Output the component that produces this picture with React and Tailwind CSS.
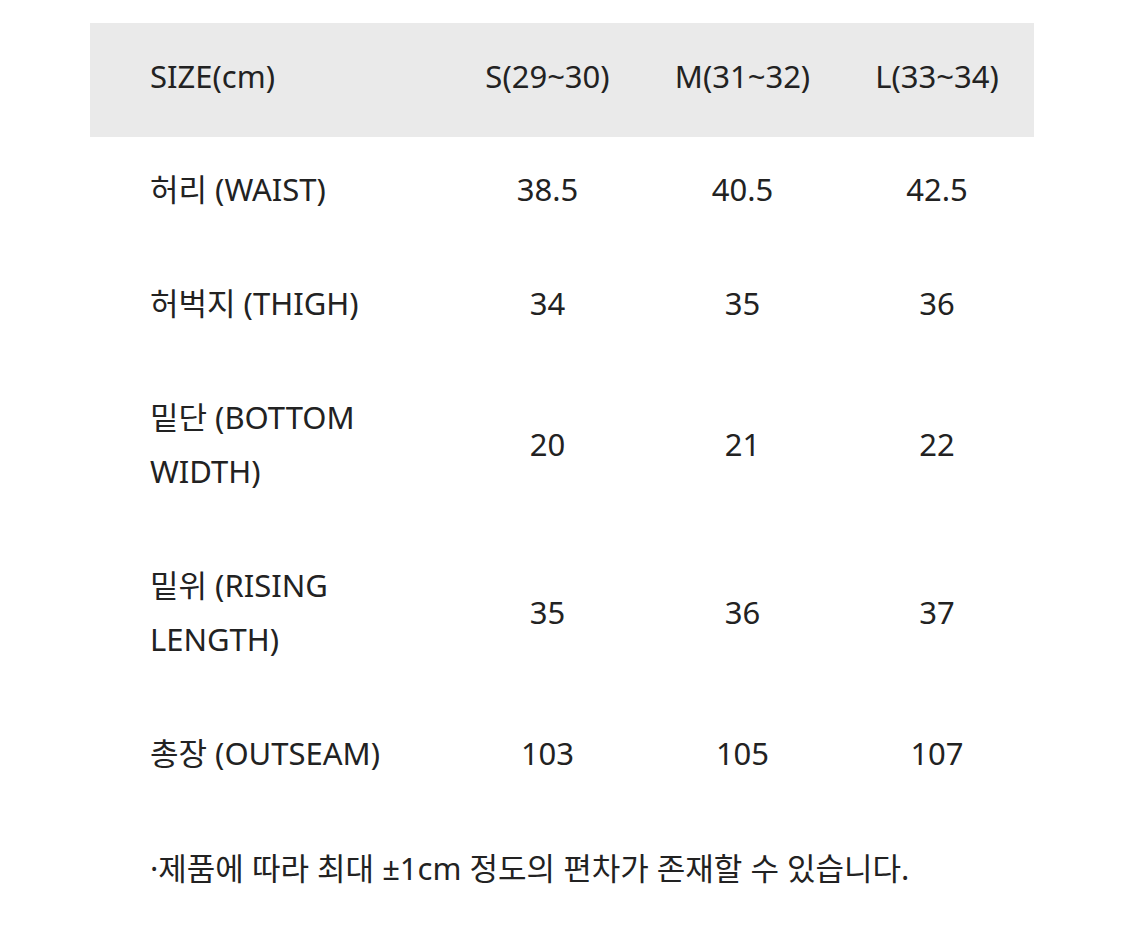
import React from "react";

const rows = [
  { label: ["허리 (WAIST)"], v: ["38.5", "40.5", "42.5"] },
  { label: ["허벅지 (THIGH)"], v: ["34", "35", "36"] },
  { label: ["밑단 (BOTTOM", "WIDTH)"], v: ["20", "21", "22"] },
  { label: ["밑위 (RISING", "LENGTH)"], v: ["35", "36", "37"] },
  { label: ["총장 (OUTSEAM)"], v: ["103", "105", "107"] },
];

export default function App() {
  return (
    <div
      className="w-[1125px] h-[951px] bg-white text-[#222222] text-[31px] leading-[54px]"
      style={{ fontFamily: '"Noto Sans", "Noto Sans CJK KR", sans-serif' }}
    >
      <div className="pt-[23px] pl-[90px]">
        <div className="w-[944px]">
          <div className="flex items-center h-[114px] pb-[8px] bg-[#eaeaea]">
            <div className="w-[360px] pl-[60px]">SIZE(cm)</div>
            <div className="w-[195px] text-center">S(29~30)</div>
            <div className="w-[195px] text-center">M(31~32)</div>
            <div className="w-[194px] text-center">L(33~34)</div>
          </div>
          {rows.map((r, i) => (
            <div key={i} className="flex items-center pt-[25px] pb-[35px]">
              <div className="w-[360px] pl-[60px] whitespace-nowrap">
                {r.label.map((l, j) => (
                  <div key={j}>{l}</div>
                ))}
              </div>
              {r.v.map((v, j) => (
                <div key={j} className={(j === 2 ? "w-[194px]" : "w-[195px]") + " text-center"}>
                  {v}
                </div>
              ))}
            </div>
          ))}
          <div className="pl-[60px] pt-[26px]">·제품에 따라 최대 ±1cm 정도의 편차가 존재할 수 있습니다.</div>
        </div>
      </div>
    </div>
  );
}
